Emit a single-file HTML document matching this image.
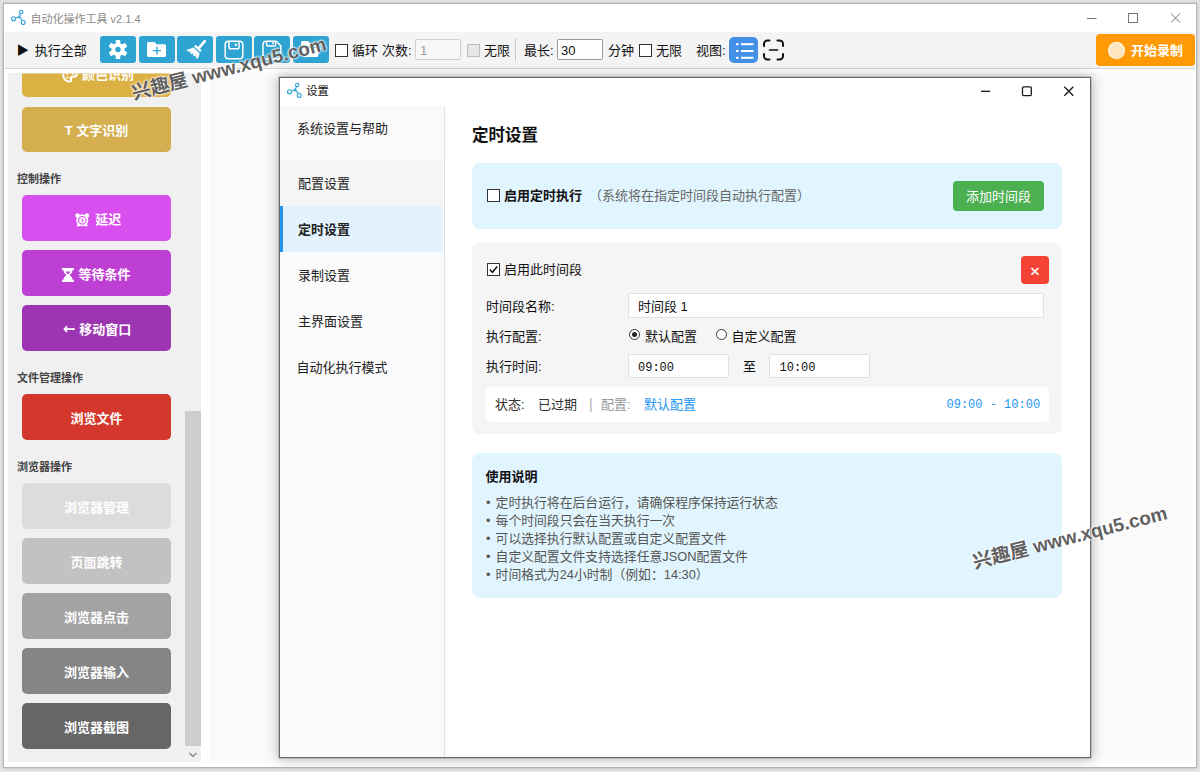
<!DOCTYPE html>
<html lang="zh-CN">
<head>
<meta charset="utf-8">
<title>自动化操作工具</title>
<style>
*{box-sizing:border-box;margin:0;padding:0}
html,body{width:1200px;height:772px;overflow:hidden}
body{background:#e5e5e5;font-family:"Liberation Sans","Noto Sans CJK SC",sans-serif;font-size:13px;color:#111;position:relative}
div,span,svg{position:absolute}
.t{white-space:nowrap;line-height:20px;height:20px}
#win{left:4px;top:4px;width:1192px;height:763px;background:#fff;box-shadow:0 0 0 1px #b4b4b4,0 0 3px 1px rgba(0,0,0,.22)}
#area{left:8px;top:73px;width:1184px;height:689px;background:#fafafa}
#titlebar{left:4px;top:4px;width:1192px;height:28px;background:#fff}
#toolbar{left:5px;top:32px;width:1190px;height:37px;background:#f4f4f4;border-bottom:1px solid #d2d2d2}
.tb{top:36px;width:36px;height:27px;background:#2fa4d2;border-radius:3px}
.cb{width:13px;height:13px;border:1px solid #333;background:#fff}
#left{left:8px;top:73px;width:192.700px;height:689px;background:#f0f0f0}
.btn{left:22px;width:149px;height:46px;border-radius:5px;color:#fff;font-weight:bold;font-size:13px;text-align:center;line-height:49px;white-space:nowrap;overflow:hidden}
.il{position:static;display:inline-block;vertical-align:middle;margin-top:-2px}
.sec{left:17px;margin-top:1px;font-size:11px;font-weight:bold;color:#444;line-height:16px;white-space:nowrap}
#dlg{left:279px;top:77px;width:812px;height:681px;background:#fff;border:1px solid #686868;box-shadow:0 0 0 .5px rgba(0,0,0,.25),0 0 12px 1px rgba(0,0,0,.28)}
#side{left:280px;top:106px;width:164.500px;height:651px;background:#fafafa;border-right:1px solid #e2e2e2}
.si{left:280px;width:163px;height:46px;line-height:48px;overflow:hidden;padding-left:18px;font-size:13px;color:#222;white-space:nowrap}
.wm{white-space:nowrap;font-size:19px;font-weight:bold;color:rgba(52,52,52,.8);line-height:24px;height:24px;transform:translate(-50%,-50%) rotate(-14.500deg);text-shadow:0 0 2px #fff,0 0 2px #fff,0 0 3px #fff}
.mono{font-family:"Liberation Mono",monospace}
.lbl{left:486px;font-size:13px;color:#111}
.inp{background:#fff;border:1px solid #e0e0e0;border-radius:2px;height:25px}
</style>
</head>
<body>
<div id="win"></div>
<div id="area"></div>
<div id="titlebar"></div>
<div id="toolbar"></div>
<!-- title -->
<div class="t" style="left:30.500px;top:8.500px;font-size:11px;color:#8a8a8a">自动化操作工具 v2.1.4</div>
<!-- toolbar -->
<div class="t" style="left:16.500px;top:41px;font-size:13px;color:#111"><span style="position:static;font-size:12.500px;margin-right:2px">▶</span> 执行全部</div>
<div class="tb" style="left:100px"></div>
<div class="tb" style="left:139px"></div>
<div class="tb" style="left:177px"></div>
<div class="tb" style="left:216px"></div>
<div class="tb" style="left:254px"></div>
<div class="tb" style="left:293px"></div>
<svg style="left:108px;top:39px" width="20" height="21" viewBox="-10 -10.5 20 21"><g fill="#fff"><circle r="6.6"/><g id="gt"><rect x="-2.3" y="-9.6" width="4.6" height="19.2" rx="1.2"/></g><rect x="-2.3" y="-9.6" width="4.6" height="19.2" rx="1.2" transform="rotate(60)"/><rect x="-2.3" y="-9.6" width="4.6" height="19.2" rx="1.2" transform="rotate(120)"/></g><circle r="2.7" fill="#2fa4d2"/></svg><svg style="left:147px;top:42px" width="20" height="16" viewBox="0 0 20 16"><path d="M1.5 0h6l2 2.2h8a1.5 1.5 0 0 1 1.5 1.5v9.8a1.5 1.5 0 0 1-1.5 1.5h-16a1.5 1.5 0 0 1-1.5-1.5v-12a1.5 1.5 0 0 1 1.5-1.5z" fill="#fff"/><path d="M6 8.6h8M10 4.8v7.6" stroke="#2fa4d2" stroke-width="1.4" fill="none"/></svg><svg style="left:185px;top:39px" width="22" height="21" viewBox="0 0 22 21"><path d="M19.800 2.200l-5.600 6.400" stroke="#fff" stroke-width="2.800" stroke-linecap="round" fill="none"/><path d="M10.600 5.800l6 5.400-1.500 1.700-6-5.400z" fill="#fff"/><path d="M8.200 8.300l6.200 5.600c.1 2.200-.6 4.300-2 5.800l-1.700-1.300.6-2.300-1.700 1.500-1.700-1.300.8-2.200-2 1.200-1.600-1.300 1.200-1.800-2.300.7-2.800-2.200c2.800-.2 5.200-1.100 7-2.400z" fill="#fff"/></svg><svg style="left:224px;top:39.500px" width="20" height="20" viewBox="0 0 20 20"><rect x="1.200" y="1.200" width="17.600" height="17.600" rx="3" fill="none" stroke="#fff" stroke-width="1.500"/><path d="M5 1.200v6.300a1.200 1.200 0 0 0 1.200 1.200h7.600a1.200 1.200 0 0 0 1.200-1.200v-6.300" fill="none" stroke="#fff" stroke-width="1.500"/><rect x="10.800" y="3.400" width="1.800" height="2.600" fill="#fff"/></svg><svg style="left:262px;top:39.500px" width="20" height="20" viewBox="0 0 20 20"><path d="M4 1.200h10.300l4.500 4.500v10.300a3 3 0 0 1-3 3h-11.800a3 3 0 0 1-3-3v-11.800a3 3 0 0 1 3-3z" fill="none" stroke="#fff" stroke-width="1.500"/><path d="M4.600 1.200v3.600a1.200 1.200 0 0 0 1.200 1.200h6.600a1.200 1.200 0 0 0 1.200-1.200v-3.600" fill="none" stroke="#fff" stroke-width="1.500"/><rect x="10.200" y="2.200" width="1.600" height="2" fill="#fff"/></svg><svg style="left:301px;top:41px" width="20" height="17" viewBox="0 0 20 17"><path d="M1.500 0h5.500l2 2.200h7.500a1.500 1.500 0 0 1 1.500 1.500v2h-12l-3.500 9h-1a1.500 1.500 0 0 1-1.500-1.500v-11.700a1.500 1.500 0 0 1 1.500-1.500z" fill="#fff"/><path d="M6.500 7h13.500l-3.400 9h-13.600z" fill="#fff"/></svg>
<div class="cb" style="left:335px;top:44px"></div>
<div class="t" style="left:352px;top:41px">循环</div>
<div class="t" style="left:382px;top:41px">次数:</div>
<div class="inp" style="left:415px;top:39px;width:46px;height:21px;border-color:#d0d0d0;background:#f8f8f8"></div>
<div class="t" style="left:420px;top:41px;color:#999">1</div>
<div class="cb" style="left:467px;top:44px;border-color:#bdbdbd;background:#e6e6e6"></div>
<div class="t" style="left:484px;top:41px">无限</div>
<div style="left:515px;top:38px;width:1px;height:23px;background:#c8c8c8"></div>
<div class="t" style="left:524px;top:41px">最长:</div>
<div class="inp" style="left:557px;top:39px;width:46px;height:21px;border-color:#9a9a9a"></div>
<div class="t" style="left:561px;top:41px">30</div>
<div class="t" style="left:608px;top:41px">分钟</div>
<div class="cb" style="left:639px;top:44px"></div>
<div class="t" style="left:656px;top:41px">无限</div>
<div class="t" style="left:696px;top:41px">视图:</div>
<div style="left:729px;top:37px;width:29px;height:26px;background:#4390e6;border-radius:5px"></div>
<div style="left:1095.500px;top:34px;width:99.300px;height:32px;background:#ff9905;border-radius:4px"></div>
<div style="left:1108px;top:42px;width:17px;height:17px;border-radius:50%;background:repeating-linear-gradient(135deg,#fde4ba 0 2px,#fdebcd 2px 3px);box-shadow:inset 0 0 0 1px #fff3df"></div>
<div class="t" style="left:1131px;top:41px;font-weight:bold;color:#fff">开始录制</div>
<svg style="left:10px;top:9px" width="16" height="16" viewBox="0 0 16 16"><g fill="none" stroke="#2a9fd6" stroke-width="1.1"><circle cx="3.5" cy="9.700" r="2"/><circle cx="11.200" cy="3" r="1.700"/><circle cx="13.200" cy="13.500" r="2"/><path d="M5.400 9.300l2.400-1M10.600 4.600l-1.400 2.600M12.300 11.700l-2.600-3.500M7.800 8.300l1.900-1.600.3 2.300z"/></g></svg>

<svg style="left:1080px;top:8px" width="110" height="20" viewBox="0 0 110 20"><g fill="none" stroke="#777" stroke-width="1"><path d="M7 10.500h9.500"/><rect x="48.500" y="5.500" width="9" height="9"/><path d="M91 5.500l9 9M100 5.500l-9 9"/></g></svg>

<svg style="left:729px;top:37px" width="29" height="26" viewBox="0 0 29 26"><g fill="#fff"><rect x="7" y="6.200" width="2.600" height="2"/><rect x="12" y="6.200" width="12.500" height="2"/><rect x="7" y="13" width="2.600" height="2"/><rect x="12" y="13" width="12.500" height="2"/><rect x="7" y="19.800" width="2.600" height="2"/><rect x="12" y="19.800" width="12.500" height="2"/></g></svg>
<svg style="left:762px;top:39px" width="23" height="22" viewBox="0 0 23 22"><g fill="none" stroke="#111" stroke-width="2" stroke-linecap="round"><path d="M2 7v-2a3.500 3.500 0 0 1 3.500-3.500h2M15.500 1.500h2a3.500 3.500 0 0 1 3.500 3.500v2M21 15v2a3.500 3.500 0 0 1-3.500 3.500h-2M7.500 20.500h-2a3.500 3.500 0 0 1-3.500-3.500v-2"/><path d="M7.500 11h8" stroke-width="1.600"/></g></svg>
<!-- left panel -->
<div id="left"></div>
<div class="btn" style="top:51px;background:#dcb144;clip-path:inset(22.500px 0 0 0);line-height:47px"><svg class="il" width="16" height="15" viewBox="0 0 16 15" style="margin:0 3.500px 0 3.500px"><path d="M8 1.200c-4 0-6.800 2.600-6.800 6 0 3.400 2.800 6.300 6.300 6.300 1.300 0 1.800-.8 1.800-1.500 0-.9-.7-1.200-.7-1.900 0-.8.600-1.300 1.500-1.300h1.600c1.900 0 3.100-1.300 3.100-3 0-2.700-2.900-4.600-6.800-4.600z" fill="none" stroke="#fff" stroke-width="2"/><circle cx="5" cy="6" r="1.100" fill="#fff"/><circle cx="8" cy="4.500" r="1.100" fill="#fff"/><circle cx="11" cy="6" r="1.100" fill="#fff"/><circle cx="5.500" cy="9.500" r="1.100" fill="#fff"/></svg>颜色识别</div>
<div class="btn" style="top:106.500px;height:45.500px;background:#d4ae4f;line-height:47px">T 文字识别</div>
<div class="sec" style="top:170px">控制操作</div>
<div class="btn" style="top:195px;background:#d94eee;padding-left:3px"><svg class="il" width="14.500" height="14" viewBox="0 0 15 14" style="margin-right:6px"><g fill="#fff"><circle cx="7.500" cy="7.300" r="6.200"/><circle cx="2.600" cy="2.400" r="2.300"/><circle cx="12.400" cy="2.400" r="2.300"/><rect x="2" y="11.500" width="3" height="2.300" rx="1"/><rect x="10" y="11.500" width="3" height="2.300" rx="1"/></g><circle cx="7.500" cy="7.300" r="3.900" fill="none" stroke="#d94eee" stroke-width="1.200"/><path d="M6.600 5.500l2 1.800-2 1.800" fill="none" stroke="#d94eee" stroke-width="1.100"/></svg>延迟</div>
<div class="btn" style="top:250px;background:#bd3fd4"><svg class="il" width="12" height="14" viewBox="0 0 12 14" style="margin-right:4px"><g fill="#fff"><rect x="0" y="0" width="12" height="2.200" rx=".6"/><rect x="0" y="11.800" width="12" height="2.200" rx=".6"/><path d="M1.500 2h9c0 2.500-1.500 3.800-3 5 1.500 1.200 3 2.500 3 5h-9c0-2.500 1.500-3.800 3-5-1.500-1.200-3-2.500-3-5z"/></g><path d="M3.600 3.600h4.800c-.4 1.200-1.400 2-2.400 2.700-1-.7-2-1.500-2.400-2.700z" fill="#bd3fd4"/></svg>等待条件</div>
<div class="btn" style="top:305px;background:#9d35b3"><span class="il" style="font-size:15px;line-height:14px;height:14px;margin-right:4px;margin-left:1px;margin-top:-3px;font-family:'DejaVu Sans',sans-serif">←</span>移动窗口</div>
<div class="sec" style="top:369px">文件管理操作</div>
<div class="btn" style="top:394px;background:#d4372b">浏览文件</div>
<div class="sec" style="top:458px">浏览器操作</div>
<div class="btn" style="top:483px;background:#dcdcdc">浏览器管理</div>
<div class="btn" style="top:538px;background:#c2c2c2">页面跳转</div>
<div class="btn" style="top:593px;background:#a3a3a3">浏览器点击</div>
<div class="btn" style="top:648px;background:#858585">浏览器输入</div>
<div class="btn" style="top:703px;background:#666">浏览器截图</div>
<div style="left:185px;top:73px;width:15.700px;height:689px;background:#f0f0f0"></div>
<div style="left:185px;top:411px;width:15.700px;height:335px;background:#cdcdcd"></div>
<svg style="left:187px;top:750px" width="12" height="10" viewBox="0 0 12 10"><path d="M2.500 3l3.500 3.500 3.500-3.500" fill="none" stroke="#777" stroke-width="1.100"/></svg>
<div style="left:200.700px;top:73px;width:9.300px;height:689px;background:#fff"></div>
<!-- dialog -->
<div id="dlg"></div>
<svg style="left:286px;top:82px" width="16" height="16" viewBox="0 0 16 16"><g fill="none" stroke="#2a9fd6" stroke-width="1.1"><circle cx="3.5" cy="9.700" r="2"/><circle cx="11.200" cy="3" r="1.700"/><circle cx="13.200" cy="13.500" r="2"/><path d="M5.400 9.300l2.400-1M10.600 4.600l-1.400 2.600M12.300 11.700l-2.600-3.500M7.800 8.300l1.900-1.600.3 2.300z"/></g></svg>
<svg style="left:975px;top:81px" width="110" height="20" viewBox="0 0 110 20"><g fill="none" stroke="#1a1a1a" stroke-width="1.300"><path d="M6 10.300h9.200"/><rect x="47.500" y="5.800" width="8.800" height="8.800" rx="1"/><path d="M89.300 5.800l9 9M98.300 5.800l-9 9"/></g></svg>
<div class="t" style="left:306.300px;top:81.200px;font-size:11.300px;color:#111">设置</div>
<div id="side"></div>
<div style="left:280px;top:160px;width:163px;height:46px;background:#f5f5f5"></div>
<div class="si" style="top:105px;padding-left:17px">系统设置与帮助</div>
<div class="si" style="top:160px">配置设置</div>
<div class="si" style="top:206px;background:#e3f2fd;border-left:3px solid #2196f3;padding-left:15px;font-weight:bold">定时设置</div>
<div class="si" style="top:252px">录制设置</div>
<div class="si" style="top:298px">主界面设置</div>
<div class="si" style="top:344px;padding-left:16.500px">自动化执行模式</div>
<!-- content -->
<div class="t" style="left:472px;top:123px;font-size:16.5px;font-weight:bold;line-height:24px;height:24px">定时设置</div>
<div style="left:472px;top:163px;width:590px;height:66px;background:#e1f5fe;border-radius:8px"></div>
<div class="cb" style="left:487px;top:189px"></div>
<div class="t" style="left:504px;top:186px;font-weight:bold">启用定时执行</div>
<div class="t" style="left:589px;top:186px;color:#666">（系统将在指定时间段自动执行配置）</div>
<div style="left:953px;top:181px;width:91px;height:30px;background:#4caf50;border-radius:4px;color:#fff;text-align:center;line-height:31px;font-size:13px">添加时间段</div>
<div style="left:472px;top:243px;width:590px;height:191px;background:#f5f5f5;border-radius:8px"></div>
<div class="cb" style="left:487px;top:263px"></div>
<svg style="left:488px;top:264px" width="11" height="11" viewBox="0 0 11 11"><path d="M1.800 5.600l2.600 2.700 4.800-5.800" fill="none" stroke="#111" stroke-width="1.500"/></svg>
<div class="t" style="left:504px;top:260px">启用此时间段</div>
<div style="left:1021px;top:256px;width:28px;height:28px;background:#f44336;border-radius:4px;color:#fff;text-align:center;line-height:32px;font-size:17px;font-weight:normal;-webkit-text-stroke:.3px #fff">×</div>
<div class="t lbl" style="top:297px">时间段名称:</div>
<div class="inp" style="left:628px;top:293px;width:416px"></div>
<div class="t" style="left:638px;top:297px">时间段 1</div>
<div class="t lbl" style="top:327px">执行配置:</div>
<div style="left:629px;top:329px;width:11px;height:11px;border:1px solid #333;border-radius:50%;background:#fff"></div>
<div style="left:632px;top:332px;width:5px;height:5px;border-radius:50%;background:#222"></div>
<div class="t" style="left:645px;top:327px">默认配置</div>
<div style="left:716px;top:329px;width:11px;height:11px;border:1px solid #333;border-radius:50%;background:#fff"></div>
<div class="t" style="left:731.500px;top:327px">自定义配置</div>
<div class="t lbl" style="top:357px">执行时间:</div>
<div class="inp" style="left:628px;top:354px;width:101px;height:24px"></div>
<div class="t mono" style="left:638px;top:358px;font-size:12px">09:00</div>
<div class="t" style="left:743px;top:356.500px">至</div>
<div class="inp" style="left:769px;top:354px;width:101px;height:24px"></div>
<div class="t mono" style="left:779.500px;top:358px;font-size:12px">10:00</div>
<div style="left:486px;top:387px;width:563px;height:35px;background:#fff;border-radius:4px"></div>
<div class="t" style="left:495px;top:395px;font-size:13px;color:#333">状态:</div>
<div class="t" style="left:538px;top:395px;font-size:13px;color:#333">已过期</div>
<div class="t" style="left:589px;top:394px;font-size:14px;color:#aaa">|</div>
<div class="t" style="left:601px;top:395px;font-size:13px;color:#999">配置:</div>
<div class="t" style="left:644px;top:395px;font-size:13px;color:#2196f3">默认配置</div>
<div class="t mono" style="left:946.500px;top:395px;font-size:12px;color:#2196f3">09:00 - 10:00</div>
<div style="left:472px;top:453px;width:590px;height:145px;background:#e1f5fe;border-radius:8px"></div>
<div class="t" style="left:485.500px;top:467px;font-weight:bold">使用说明</div>
<div class="t" style="left:486px;top:492.500px;color:#555;font-size:12.830px;word-spacing:1.500px">• 定时执行将在后台运行，请确保程序保持运行状态</div>
<div class="t" style="left:486px;top:510.500px;color:#555;font-size:12.830px;word-spacing:1.500px">• 每个时间段只会在当天执行一次</div>
<div class="t" style="left:486px;top:528.500px;color:#555;font-size:12.830px;word-spacing:1.500px">• 可以选择执行默认配置或自定义配置文件</div>
<div class="t" style="left:486px;top:546.500px;color:#555;font-size:12.830px;word-spacing:1.500px">• 自定义配置文件支持选择任意JSON配置文件</div>
<div class="t" style="left:486px;top:564.500px;color:#555;font-size:12.830px;word-spacing:1.500px">• 时间格式为24小时制（例如：14:30）</div>
<!-- watermarks -->
<div class="wm" style="left:228.500px;top:68.500px">兴趣屋 www.xqu5.com</div>
<div class="wm" style="left:1069.600px;top:538px">兴趣屋 www.xqu5.com</div>
</body>
</html>
